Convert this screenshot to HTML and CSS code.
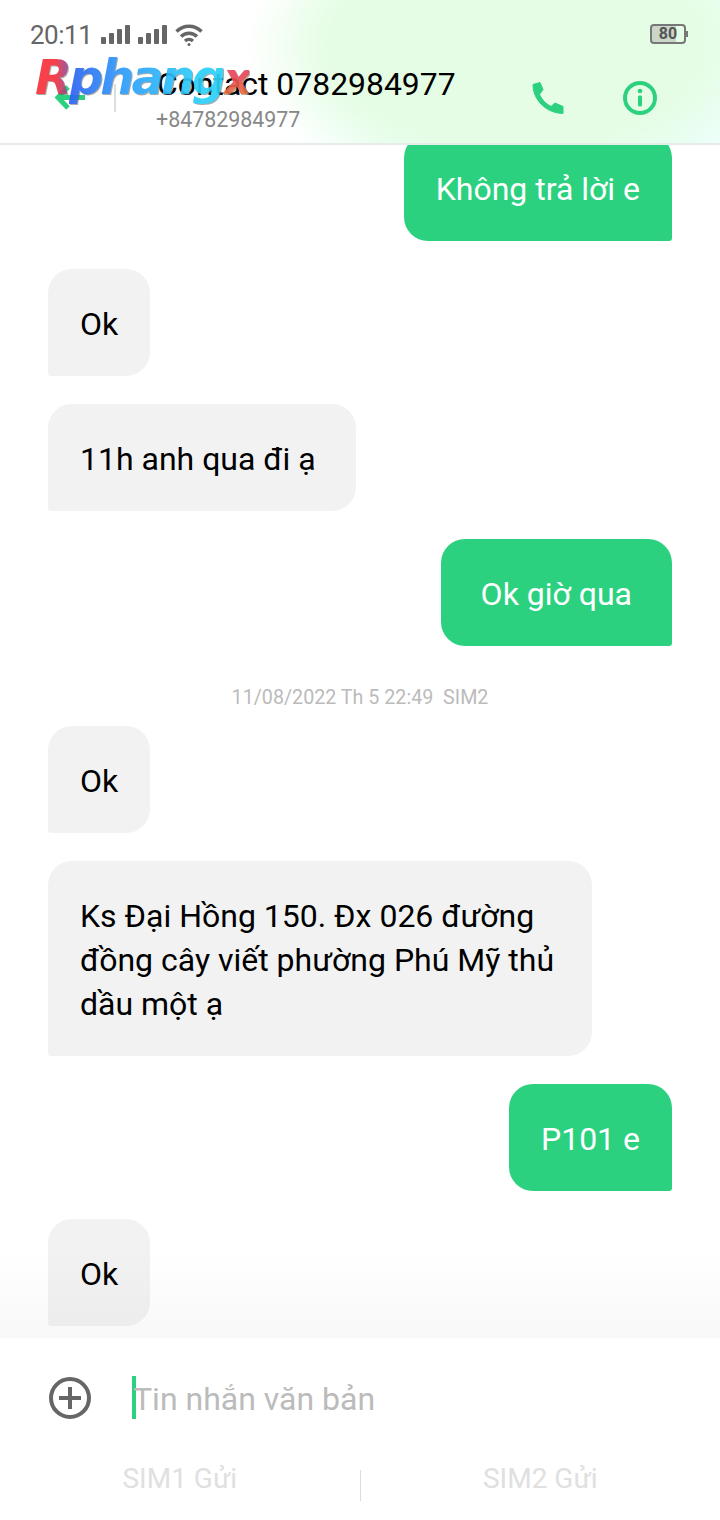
FILE: index.html
```html
<!DOCTYPE html>
<html lang="vi">
<head>
    <meta charset="UTF-8">
    <meta name="viewport" content="width=device-width, initial-scale=1.0">
    <title>Contact 0782984977</title>
    <link rel="stylesheet" href="styles.css">
</head>
<body>
    <div class="phone">
        <header class="top">
            <div class="status-bar">
                <div class="status-left">
                    <span class="clock">20:11</span>
                    <svg class="signal" width="30" height="20" viewBox="0 0 30 20"><rect x="0" y="12" width="5" height="7" rx="1"/><rect x="8" y="8" width="5" height="11" rx="1"/><rect x="16" y="4" width="5" height="15" rx="1"/><rect x="24" y="0" width="5" height="19" rx="1"/></svg>
                    <svg class="signal" width="30" height="20" viewBox="0 0 30 20"><rect x="0" y="12" width="5" height="7" rx="1"/><rect x="8" y="8" width="5" height="11" rx="1"/><rect x="16" y="4" width="5" height="15" rx="1"/><rect x="24" y="0" width="5" height="19" rx="1"/></svg>
                    <svg class="wifi" width="28" height="22" viewBox="0 0 28 22" fill="none" stroke="#666" stroke-width="3.500"><path d="M1.500 7.500C8.500 .5 19.500 .5 26.500 7.500"/><path d="M6 12.500C10.500 8 17.500 8 22 12.500"/><path d="M10 17C12.300 15 15.700 15 18 17"/><circle cx="14" cy="20.500" r="1.500" fill="#666" stroke="none"/></svg>
                </div>
                <div class="battery">
                    <div class="battery-body">80</div>
                    <div class="battery-tip"></div>
                </div>
            </div>
            <div class="title-bar">
                <svg class="back" width="32" height="28" viewBox="0 0 32 28" fill="none" stroke="#2cd180" stroke-width="5"><path d="M14 3L4 13.500L14 24"/><path d="M4 13.500H31"/></svg>
                <div class="title-divider"></div>
                <div class="title-text">
                    <div class="contact-name">Contact 0782984977</div>
                    <div class="contact-phone">+84782984977</div>
                </div>
                <svg class="call" width="32" height="32" viewBox="0 0 32 32"><path d="M1 2.500L8 .5L11 7.500L7.500 12.500C10 18 14 22 19 24.500L23 21L31 24.500V31.500C14 31 1 18 1 2.500Z" fill="#2cd180" stroke="#2cd180" stroke-linejoin="round"/></svg>
                <svg class="info" width="36" height="36" viewBox="0 0 36 36"><circle cx="18" cy="18" r="15" fill="none" stroke="#2cd180" stroke-width="4"/><circle cx="18" cy="11" r="2.300" fill="#2cd180"/><rect x="16" y="15.500" width="4" height="11" rx="1.500" fill="#2cd180"/></svg>
            </div>
            <div class="watermark"><span class="wm-r">R</span><span class="wm-blue">phang</span><span class="wm-x">x</span></div>
        </header>

        <main class="messages">
            <div class="bubble sent">Không trả lời e</div>
            <div class="bubble received">Ok</div>
            <div class="bubble received roomy-end">11h anh qua đi ạ</div>
            <div class="bubble sent roomy">Ok giờ qua</div>
            <div class="timestamp">11/08/2022 Th 5 22:49&nbsp; SIM2</div>
            <div class="bubble received">Ok</div>
            <div class="bubble received wide">Ks Đại Hồng 150. Đx 026 đường đồng cây viết phường Phú Mỹ thủ dầu một ạ</div>
            <div class="bubble sent">P101 e</div>
            <div class="bubble received">Ok</div>
            <div class="fade"></div>
        </main>

        <footer class="composer">
            <div class="input-row">
                <svg class="plus" width="44" height="44" viewBox="0 0 44 44" fill="none" stroke="#666"><circle cx="22" cy="22" r="19" stroke-width="4"/><path d="M22 11V33M11 22H33" stroke-width="4"/></svg>
                <div class="input">
                    <div class="caret"></div>
                    <span class="placeholder">Tin nhắn văn bản</span>
                </div>
            </div>
            <div class="send-row">
                <div class="send-btn">SIM1 Gửi</div>
                <div class="send-divider"></div>
                <div class="send-btn">SIM2 Gửi</div>
            </div>
        </footer>
    </div>
</body>
</html>
```

FILE: styles.css
```css
html, body { margin: 0; padding: 0; }
body { width: 720px; height: 1520px; overflow: hidden; background: #fff; font-family: Roboto, "Noto Sans", sans-serif; }
.phone { width: 720px; height: 1520px; display: flex; flex-direction: column; }

.top { position: relative; height: 143px; flex: none; border-bottom: 2px solid #e6ece8; z-index: 2; background: radial-gradient(ellipse 270px 140px at 515px 45px, #e5fde4 68%, rgba(229,253,228,0) 100%), linear-gradient(90deg, #fff 40%, #e8fff4 56%, #e8fff4 92%, #edfff9 100%); }
.status-bar { height: 60px; padding: 10px 32px 0 30px; display: flex; justify-content: space-between; align-items: center; box-sizing: border-box; }
.status-left { display: flex; align-items: center; gap: 7px; }
.clock { font-size: 26px; font-weight: 400; color: #666; letter-spacing: -0.5px; margin-right: 3px; width: 61px; }
.signal { fill: #666; }
.battery { display: flex; align-items: center; margin-top: -2px; }
.battery-body { width: 36px; height: 20px; box-sizing: border-box; border: 2px solid #777; border-radius: 4px; font-size: 16px; line-height: 16px; font-weight: 700; color: #555; text-align: center; background: linear-gradient(90deg, #c9d6c8 75%, transparent 75%) padding-box; }
.battery-tip { width: 2px; height: 6px; background: #777; }

.title-bar { height: 83px; display: flex; align-items: center; position: relative; }
.back { margin-left: 54px; margin-top: -7px; flex: none; }
.title-divider { width: 2px; height: 28px; background: #ddd; margin-left: 28px; margin-top: -7px; flex: none; }
.title-text { margin-left: 41px; margin-top: -5px; flex: 1; }
.contact-name { font-size: 31.900px; line-height: 40px; color: #000; }
.contact-phone { font-size: 21.400px; line-height: 30px; margin-top: 1px; margin-left: -1px; color: #888; }
.call { margin-right: 58px; margin-top: -8px; flex: none; }
.info { margin-right: 62px; margin-top: -8px; flex: none; }

.watermark { position: absolute; left: 35px; top: 48px; font-family: "DejaVu Sans", sans-serif; font-size: 48px; line-height: 58px; font-weight: 700; font-style: italic; letter-spacing: -3px; white-space: nowrap; opacity: 0.92; filter: drop-shadow(1px 1px 0 rgba(90,90,90,0.55)); }
.wm-r, .wm-blue, .wm-x { -webkit-background-clip: text; background-clip: text; color: transparent; }
.wm-r { background-image: linear-gradient(90deg, #f8323c 60%, #8a4fa0); }
.wm-blue { background-image: linear-gradient(90deg, #2e62f0, #2e9cfb 35%, #2cd0f8 85%); }
.wm-x { font-size: 44px; background-image: linear-gradient(#e8475a 45%, #e88a30); }

.messages { position: relative; flex: 1; min-height: 0; overflow: hidden; display: flex; flex-direction: column; justify-content: flex-end; gap: 28px; padding: 0 48px 12px; }
.bubble { font-size: 32px; line-height: 44px; padding: 33px 32px 30px; border-radius: 24px; max-width: 544px; box-sizing: border-box; flex: none; }
.sent { align-self: flex-end; background: #2cd180; color: #fff; border-bottom-right-radius: 3px; }
.received { align-self: flex-start; background: #f2f2f2; color: #000; border-bottom-left-radius: 3px; }
.wide { width: 544px; }
.roomy { padding-left: 40px; padding-right: 40px; }
.roomy-end { padding-right: 40px; }
.timestamp { text-align: center; font-size: 19.700px; line-height: 22px; color: #bbb; margin: 13px 0 -11px; flex: none; }
.fade { position: absolute; left: 0; right: 0; bottom: 0; height: 90px; background: linear-gradient(rgba(0,0,0,0), rgba(0,0,0,0.028)); }

.composer { height: 182px; flex: none; display: flex; flex-direction: column; background: #fff; }
.input-row { height: 120px; display: flex; align-items: center; padding-left: 48px; }
.input { display: flex; align-items: center; margin-left: 40px; }
.caret { width: 4px; height: 43px; background: #2cd180; margin-bottom: 2px; }
.placeholder { font-size: 32px; color: #bbb; margin-left: -3px; margin-top: 2px; }
.send-row { display: flex; align-items: center; height: 40px; }
.send-btn { flex: 1; text-align: center; font-size: 28px; color: #e0e0e0; }
.send-divider { width: 1px; height: 31px; background: #ddd; margin-top: 15px; }
```
